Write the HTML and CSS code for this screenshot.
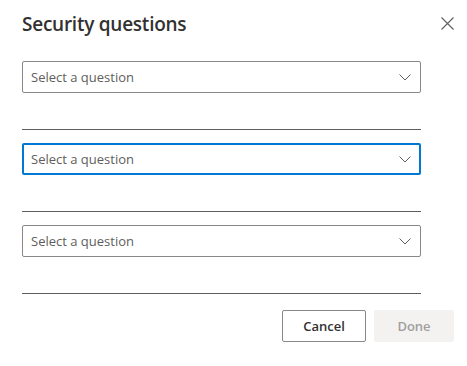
FILE: index.html
```html
<!DOCTYPE html>
<html lang="en">
<head>
    <meta charset="UTF-8">
    <meta name="viewport" content="width=device-width, initial-scale=1.0">
    <title>Security questions</title>
    <link rel="stylesheet" href="styles.css">
</head>
<body>

    <!-- Dialog -->
    <div class="dialog">
        <div class="dialog-header">
            <h2>Security questions</h2>
            <button class="close-btn" aria-label="Close">
                <svg width="13" height="13" viewBox="0 0 13 13">
                    <path d="M0.5 0.5 L12.5 12.5 M12.5 0.5 L0.5 12.5" stroke="#605e5c" stroke-width="1.1" fill="none"/>
                </svg>
            </button>
        </div>

        <div class="questions">
            <div class="question">
                <div class="dropdown">
                    <span>Select a question</span>
                    <svg class="chevron" width="12" height="7" viewBox="0 0 12 7">
                        <path d="M0.5 0.5 L6 6 L11.5 0.5" stroke="#605e5c" stroke-width="1" fill="none"/>
                    </svg>
                </div>
                <div class="answer"></div>
            </div>
            <div class="question">
                <div class="dropdown focused">
                    <span>Select a question</span>
                    <svg class="chevron" width="12" height="7" viewBox="0 0 12 7">
                        <path d="M0.5 0.5 L6 6 L11.5 0.5" stroke="#605e5c" stroke-width="1" fill="none"/>
                    </svg>
                </div>
                <div class="answer"></div>
            </div>
            <div class="question">
                <div class="dropdown">
                    <span>Select a question</span>
                    <svg class="chevron" width="12" height="7" viewBox="0 0 12 7">
                        <path d="M0.5 0.5 L6 6 L11.5 0.5" stroke="#605e5c" stroke-width="1" fill="none"/>
                    </svg>
                </div>
                <div class="answer"></div>
            </div>
        </div>

        <div class="dialog-footer">
            <button class="btn btn-cancel">Cancel</button>
            <button class="btn btn-done" disabled>Done</button>
        </div>
    </div>

</body>
</html>
```

FILE: styles.css
```css
/* Reset */
* {
    margin: 0;
    padding: 0;
    box-sizing: border-box;
}

body {
    font-family: "Open Sans", "Noto Sans", sans-serif;
    background-color: #ffffff;
    color: #323130;
}

/* Dialog */
.dialog {
    width: 467px;
    padding: 10px 13px 0 22px;
}

.dialog-header {
    display: flex;
    justify-content: space-between;
    align-items: flex-start;
}

.dialog-header h2 {
    font-size: 19px;
    font-weight: 600;
    line-height: 28px;
    letter-spacing: -0.25px;
    color: #323130;
}

.close-btn {
    background: none;
    border: none;
    width: 13px;
    height: 13px;
    margin-top: 7px;
    display: flex;
    cursor: pointer;
}

/* Questions */
.questions {
    width: 399px;
    margin-top: 23px;
    display: flex;
    flex-direction: column;
    gap: 13px;
}

.question {
    display: flex;
    flex-direction: column;
}

.dropdown {
    height: 32px;
    border: 1px solid #8a8886;
    border-radius: 2px;
    display: flex;
    align-items: center;
    justify-content: space-between;
    padding: 0 8px 0 8px;
    font-size: 13px;
    color: #605e5c;
}

.dropdown.focused {
    border: 2px solid #0078d4;
    padding: 0 7px 0 7px;
}

.chevron {
    margin-right: 1px;
}

.answer {
    height: 37px;
    border-bottom: 1px solid #605e5c;
}

/* Footer */
.dialog-footer {
    display: flex;
    justify-content: flex-end;
    gap: 8px;
    margin-top: 16px;
}

.btn {
    height: 32px;
    font-family: "Open Sans", "Noto Sans", sans-serif;
    font-size: 13px;
    font-weight: 600;
    border-radius: 2px;
}

.btn-cancel {
    width: 84px;
    background-color: #ffffff;
    border: 1px solid #8a8886;
    color: #323130;
    cursor: pointer;
}

.btn-done {
    width: 80px;
    background-color: #f3f2f1;
    border: 1px solid #f3f2f1;
    color: #a19f9d;
}
```
